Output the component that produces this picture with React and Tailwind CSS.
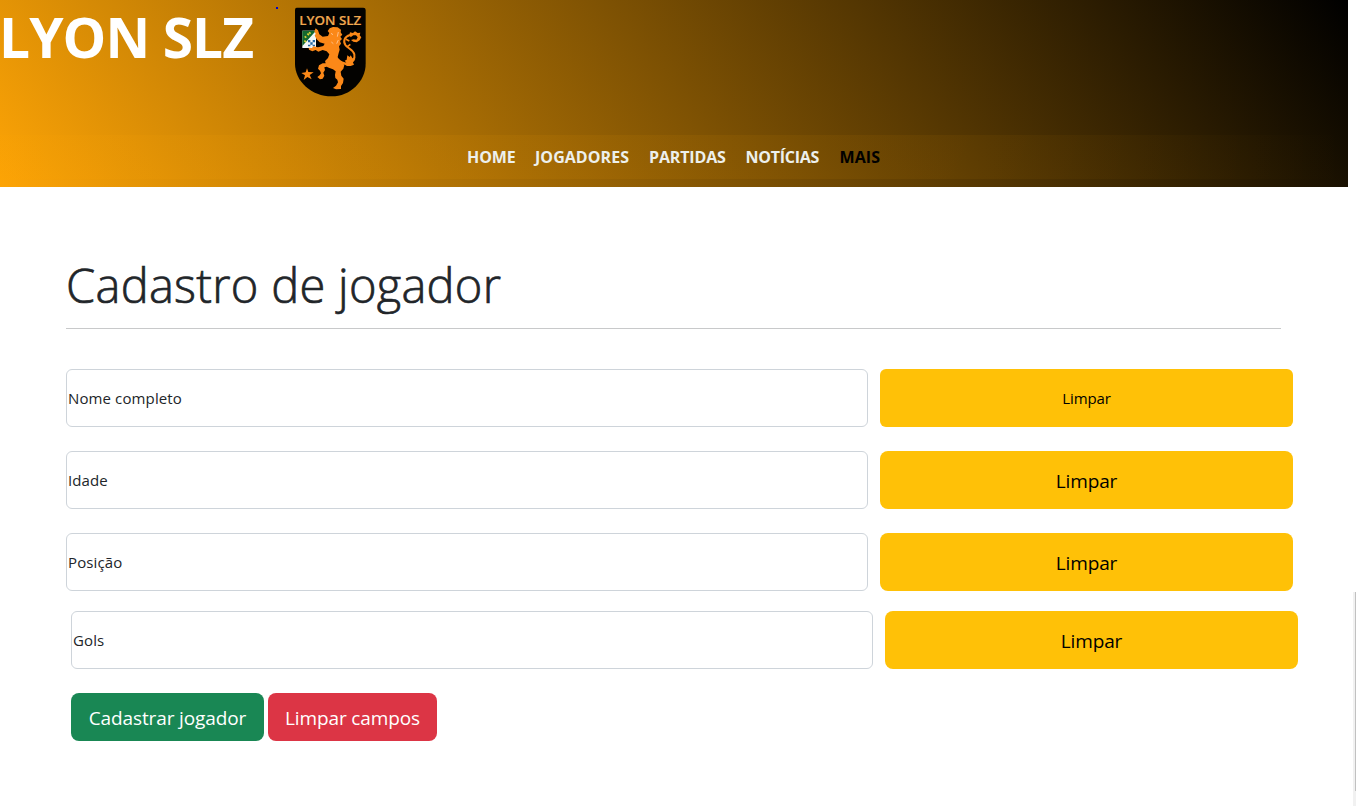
import React from "react";

const links = [
  { label: "HOME", cls: "w-[49px] tracking-[-0.1px]" },
  { label: "JOGADORES", cls: "w-[95px] tracking-[0.05px]" },
  { label: "PARTIDAS", cls: "w-[77.5px] tracking-[-0.15px]" },
  { label: "NOTÍCIAS", cls: "w-[75px] tracking-[-0.25px]" },
];

const fields = [
  { label: "Nome completo", row: "mb-6", btn: "rounded-md text-[15px] tracking-[-0.1px]" },
  { label: "Idade", row: "mb-6", btn: "rounded-lg pt-[2px] text-[19px] tracking-[-0.15px]" },
  { label: "Posição", row: "mb-5", btn: "rounded-lg pt-[2px] text-[19px] tracking-[-0.15px]" },
  { label: "Gols", row: "mb-6 ml-[5px]", btn: "rounded-lg pt-[2px] text-[19px] tracking-[-0.15px]" },
];

function Crest() {
  return (
    <svg className="mt-[7px] ml-[17px] h-[90px] w-[72px]" viewBox="72 20 216 270">
      <path d="M80 22H280Q287 22 287 29V190C287 243 240 288 185 288C125 288 75 243 75 190V29Q75 22 80 22Z" fill="#030200" />
      <text x="88" y="73" fontSize="39" textLength="186" lengthAdjust="spacingAndGlyphs" fontWeight="600" fill="#f0a850" stroke="#f0a850" strokeWidth="0.5" fontFamily="'Open Sans', sans-serif">LYON SLZ</text>
      <path d="M97 91H138V143H97Z" fill="#f4f7f6" />
      <path d="M97 91H138L97 137Z" fill="#14682f" />
      <path d="M104 108l5 4M112 100l5 4M103 121l5 4M117 96l5 4" stroke="#dcd338" strokeWidth="5" />
      <path d="M114 119h7v7h-7zM128 119h7v7h-7zM121 126h7v7h-7zM114 133h7v5h-7zM128 133h7v5h-7z" fill="#2468a3" />
      <g fill="#fb8818">
        <path d="M137 84L144 90L148 102L158 109L174 107L178 98L173 92L179 84L189 80L203 81L213 88L212 96L217 103L211 109L216 116L210 122L213 130L207 138L209 148L206 158L203 170L206 178L216 184L223 194L220 205L212 214L214 226L221 235L219 248L213 257L213 266L198 267L189 263L198 256L204 246L202 238L196 233L195 224L197 213L189 207L178 203L170 199L163 201L165 209L160 217L163 226L158 235L150 237L142 230L149 225L153 219L150 211L144 205L147 195L158 189L167 189L165 182L174 173L178 162L170 153L158 149L145 154L137 149L127 153L117 148L116 142L126 143L130 138L144 141L160 137L164 130L149 126L140 117L134 106L137 100L133 93Z" />
        <path d="M111 204L115 215L131 216L119 224L125 237L112 230L101 239L105 225L94 218L107 216Z" />
        <path d="M238 103L240 96L249 98L255 93L263 98L271 97L269 105L274 111L269 120L260 126L250 124L243 119L251 117L259 118L263 111L258 105L250 105L242 111Z" />
        <path d="M232 165L239 170L242 165L247 173L256 178L248 184L252 193L242 197L231 197L222 192L229 187L224 181L230 178Z" />
      </g>
      <path d="M240 104C223 109 218 123 227 135C235 145 250 148 253 162C256 176 247 190 232 190C218 190 210 184 203 176" fill="none" stroke="#fb8818" strokeWidth="6" />
      <path d="M228 117l10 5M232 139l9-7" stroke="#fb8818" strokeWidth="5" />
      <path d="M183 99L189 103M184 125L190 130M205 95L202 109M205 119L200 130" stroke="#ffc18a" strokeWidth="3" />
    </svg>
  );
}

export default function App() {
  return (
    <div className="relative h-[806px] w-full overflow-hidden bg-white font-['Open_Sans',sans-serif] text-[#212529]">
      <header className="flex h-[187px] w-[1348px] flex-col bg-[linear-gradient(52deg,#fda406,black)]">
        <div className="flex h-[135px] items-start">
          <h1 className="w-[276px] -indent-px text-[55px] leading-[73px] font-bold tracking-[-0.9px] whitespace-nowrap text-white">LYON SLZ</h1>
          <span className="mt-[7px] -mr-px h-[2px] w-[2px] bg-[#0000d0]" />
          <Crest />
        </div>
        <nav className="flex h-11 items-center bg-[linear-gradient(90deg,rgba(255,165,0,0.1),rgba(255,165,0,0.06)_70%,rgba(255,165,0,0))] pl-[467px] text-base font-bold whitespace-nowrap text-[#edf0ec]">
          <div className="flex gap-[19px]">
            {links.map((l) => (
              <a key={l.label} className={l.cls}>{l.label}</a>
            ))}
            <a className="tracking-[0.1px] text-black">MAIS</a>
          </div>
        </nav>
      </header>

      <main className="pl-[66px]">
        <h2 className="mt-[61px] h-[81px] w-[1215px] border-b border-[#c8c9ca] text-[47px] leading-[74px] font-light tracking-[0.28px] whitespace-nowrap [-webkit-text-stroke:0.7px_#212529]">Cadastro de jogador</h2>
        <form className="mt-10" onSubmit={(e) => e.preventDefault()}>
          {fields.map((f) => (
            <div key={f.label} className={`flex gap-3 ${f.row}`}>
              <label className="flex h-[58px] w-[802px] items-center rounded-md border border-[#ced4da] pl-px text-[15px] tracking-[0.12px]">{f.label}</label>
              <button type="button" className={`h-[58px] w-[413px] bg-[#ffc107] text-black ${f.btn}`}>Limpar</button>
            </div>
          ))}
          <div className="ml-[5px] flex gap-1 text-[19px] tracking-[-0.12px] text-white">
            <button type="button" className="h-12 w-[193px] rounded-lg bg-[#198754] pt-[2px] whitespace-nowrap">Cadastrar jogador</button>
            <button type="button" className="h-12 w-[169px] rounded-lg bg-[#dc3545] pt-[2px] whitespace-nowrap">Limpar campos</button>
          </div>
        </form>
      </main>

      <div className="absolute top-[592px] right-0 h-[214px] w-[3px] bg-[#f1f1f1]">
        <div className="ml-auto h-[199px] w-px bg-[#c1c1c1]" />
      </div>
    </div>
  );
}
